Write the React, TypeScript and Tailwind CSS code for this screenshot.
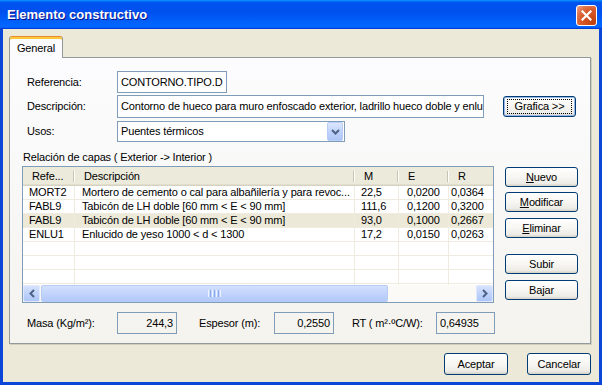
import React from "react";

function Btn({ children, className = "" }: { children: React.ReactNode; className?: string }) {
  return (
    <div
      className={`flex items-center justify-center rounded-[3px] border border-[#003c74] bg-[linear-gradient(180deg,#ffffff_0%,#f7f6f2_50%,#ecebe6_86%,#d6d0c5_100%)] text-black ${className}`}
    >
      {children}
    </div>
  );
}

const rows = [
  { r: "MORT2", d: "Mortero de cemento o cal para albañilería y para revoc...", m: "22,5", e: "0,0200", rr: "0,0364", sel: false },
  { r: "FABL9", d: "Tabicón de LH doble [60 mm < E < 90 mm]", m: "111,6", e: "0,1200", rr: "0,3200", sel: false },
  { r: "FABL9", d: "Tabicón de LH doble [60 mm < E < 90 mm]", m: "93,0", e: "0,1000", rr: "0,2667", sel: true },
  { r: "ENLU1", d: "Enlucido de yeso 1000 < d < 1300", m: "17,2", e: "0,0150", rr: "0,0263", sel: false },
  { r: "", d: "", m: "", e: "", rr: "", sel: false },
  { r: "", d: "", m: "", e: "", rr: "", sel: false },
  { r: "", d: "", m: "", e: "", rr: "", sel: false },
  { r: "", d: "", m: "", e: "", rr: "", sel: false },
];

function HeadCell({ w, pl, label }: { w: string; pl: string; label: string }) {
  return (
    <div className={`flex h-full shrink-0 items-center ${w}`}>
      <span className={`${pl} truncate`}>{label}</span>
      <span className="ml-auto h-[11px] w-[2px] shrink-0 border-l border-l-[#c7c5b2] border-r border-r-white" />
    </div>
  );
}

function Chevron({ dir }: { dir: "left" | "right" | "down" }) {
  if (dir === "down")
    return (
      <svg width="9" height="6" viewBox="0 0 9 6">
        <path d="M1 1 L4.5 4.5 L8 1" fill="none" stroke="#4d6185" strokeWidth="2" />
      </svg>
    );
  return (
    <svg width="6" height="9" viewBox="0 0 6 9">
      <path
        d={dir === "left" ? "M5 1 L1.5 4.5 L5 8" : "M1 1 L4.5 4.5 L1 8"}
        fill="none"
        stroke="#4d6185"
        strokeWidth="2"
      />
    </svg>
  );
}

export default function App() {
  return (
    <div className="flex h-[385px] w-[602px] flex-col overflow-hidden font-['Liberation_Sans',Arial,sans-serif] text-[11px] leading-[13px] tracking-[-0.15px] text-black">
      {/* Title bar */}
      <div className="flex h-[29px] shrink-0 items-center justify-between bg-[linear-gradient(180deg,#0997ff_0%,#0053ee_8%,#0050ee_40%,#0066ff_88%,#0066ff_93%,#005bff_95%,#003dd7_96%,#003dd7_100%)] pl-[7px] pr-[5px]">
        <span className="text-[13px] font-bold tracking-normal text-white [text-shadow:1px_1px_#0f1089]">
          Elemento constructivo
        </span>
        <div className="mt-[1px] flex h-[21px] w-[21px] items-center justify-center rounded-[3px] border border-white bg-[radial-gradient(circle_at_85%_85%,#c1400f_0%,#d95a2b_55%,#e0754f_75%,#f0a88e_100%)]">
          <svg width="11" height="11" viewBox="0 0 11 11">
            <path d="M1.5 1.5 L9.5 9.5 M9.5 1.5 L1.5 9.5" stroke="white" strokeWidth="2.2" strokeLinecap="square" />
          </svg>
        </div>
      </div>

      {/* Body */}
      <div className="flex flex-1 flex-col border-x-[3px] border-b-[3px] border-[#0b46d8] bg-[#ece9d8] pl-[6px] pr-[8px] pt-[7px]">
        {/* Tab strip */}
        <div className="flex">
          <div className="relative z-10 -mb-px flex h-[22px] w-[54px] items-center justify-center rounded-t-[3px] border-x border-t border-x-[#919b9c] border-t-[#e68b2c] bg-[#fcfcfe] pt-[2px] shadow-[inset_0_2px_#ffc83c]">
            General
          </div>
        </div>

        {/* Tab panel */}
        <div className="flex h-[287px] w-[582px] flex-col border border-[#919b9c] bg-[linear-gradient(180deg,#fcfcfe,#f4f3ee)] pt-[13px] shadow-[1px_1px_0_#d0cebf]">
          {/* Row 1 */}
          <div className="flex h-[22px] items-center pl-[17px]">
            <span className="w-[90px]">Referencia:</span>
            <div className="flex h-[22px] w-[110px] items-center border border-[#7f9db9] bg-white pl-[3px]">
              CONTORNO.TIPO.D
            </div>
          </div>
          {/* Row 2 */}
          <div className="mt-[2px] flex h-[23px] items-center pl-[17px]">
            <span className="w-[90px]">Descripción:</span>
            <div className="flex h-[23px] w-[367px] items-center whitespace-nowrap border border-[#7f9db9] bg-white pl-[3px]">
              Contorno de hueco para muro enfoscado exterior, ladrillo hueco doble y enlu
            </div>
            <Btn className="ml-[19px] h-[21px] w-[73px] shadow-[inset_0_0_0_1px_#98b8ea]">
              <span className="flex h-[15px] w-[65px] items-center justify-center border border-dotted border-black">
                Grafica &gt;&gt;
              </span>
            </Btn>
          </div>
          {/* Row 3 */}
          <div className="mt-[3px] flex h-[21px] items-center pl-[17px]">
            <span className="w-[90px]">Usos:</span>
            <div className="flex h-[21px] w-[228px] items-center border border-[#7f9db9] bg-white pl-[3px] pr-px">
              <span className="flex-1">Puentes térmicos</span>
              <div className="flex h-[19px] w-[16px] items-center justify-center rounded-[2px] border border-[#b9cdf7] bg-[linear-gradient(180deg,#dbe6fd,#bcd0fb_60%,#aec5f7)]">
                <Chevron dir="down" />
              </div>
            </div>
          </div>

          {/* Relación label */}
          <div className="mt-[8px] flex h-[14px] items-center pl-[13px]">Relación de capas ( Exterior -&gt; Interior )</div>

          {/* Table + buttons */}
          <div className="mt-[2px] flex pl-[12px]">
            <div className="flex h-[137px] w-[472px] flex-col overflow-hidden border border-[#7f9db9] bg-white">
              {/* Header */}
              <div className="flex h-[19px] shrink-0 bg-[#ebeadb] shadow-[inset_0_-1px_#d6d2c2,inset_0_-2px_#e2decd]">
                <HeadCell w="w-[52px]" pl="pl-[9px]" label="Refe..." />
                <HeadCell w="w-[280px]" pl="pl-[9px]" label="Descripción" />
                <HeadCell w="w-[44px]" pl="pl-[9px]" label="M" />
                <HeadCell w="w-[50px]" pl="pl-[9px]" label="E" />
                <HeadCell w="w-[60px]" pl="pl-[9px]" label="R" />
              </div>
              {/* Rows */}
              <div className="flex flex-1 flex-col overflow-hidden">
                {rows.map((row, i) => (
                  <div
                    key={i}
                    className={`flex h-[14px] shrink-0 whitespace-nowrap ${row.sel ? "bg-[#ece9d8]" : ""}`}
                  >
                    <div className="w-[52px] shrink-0 overflow-hidden border-b border-r border-[#efecdf] pl-[6px]">{row.r}</div>
                    <div className="w-[280px] shrink-0 overflow-hidden border-b border-r border-[#efecdf] pl-[7px]">{row.d}</div>
                    <div className="w-[44px] shrink-0 overflow-hidden border-b border-r border-[#efecdf] pl-[6px]">{row.m}</div>
                    <div className="w-[50px] shrink-0 overflow-hidden border-b border-r border-[#efecdf] pl-[8px]">{row.e}</div>
                    <div className="w-[60px] shrink-0 overflow-hidden border-b border-r border-[#efecdf] pl-[2px]">{row.rr}</div>
                  </div>
                ))}
              </div>
              {/* Horizontal scrollbar */}
              <div className="flex h-[17px] shrink-0 items-stretch bg-[#f7f6f1]">
                <div className="flex w-[17px] items-center justify-center rounded-[2px] border border-[#dfe8fd] bg-[linear-gradient(180deg,#d6e2fd,#bcd0fb_60%,#aec5f7)]">
                  <Chevron dir="left" />
                </div>
                <div className="ml-px flex w-[347px] items-center justify-center rounded-[2px] border border-[#b6cbf6] bg-[linear-gradient(180deg,#d3e0fd,#c2d4fc_50%,#b3c9f9)]">
                  <div className="flex h-[7px] gap-[1px]">
                    <span className="w-px bg-[#eef3fe]" />
                    <span className="w-px bg-[#8aaaf0]" />
                    <span className="w-px bg-[#eef3fe]" />
                    <span className="w-px bg-[#8aaaf0]" />
                    <span className="w-px bg-[#eef3fe]" />
                    <span className="w-px bg-[#8aaaf0]" />
                    <span className="w-px bg-[#eef3fe]" />
                  </div>
                </div>
                <div className="flex-1 bg-[#fbfaf6]" />
                <div className="flex w-[17px] items-center justify-center rounded-[2px] border border-[#dfe8fd] bg-[linear-gradient(180deg,#d6e2fd,#bcd0fb_60%,#aec5f7)]">
                  <Chevron dir="right" />
                </div>
              </div>
            </div>

            {/* Right buttons */}
            <div className="ml-[11px] flex w-[73px] flex-col">
              <Btn className="mt-[1px] h-[20px]">
                <span><u>N</u>uevo</span>
              </Btn>
              <Btn className="mt-[5px] h-[20px]">
                <span><u>M</u>odificar</span>
              </Btn>
              <Btn className="mt-[6px] h-[20px]">
                <span><u>E</u>liminar</span>
              </Btn>
              <Btn className="mt-[16px] h-[20px]">Subir</Btn>
              <Btn className="mt-[6px] h-[20px]">Bajar</Btn>
            </div>
          </div>

          {/* Bottom values */}
          <div className="mt-[9px] flex h-[22px] items-center pl-[17px]">
            <span className="w-[90px]">Masa (Kg/m²):</span>
            <div className="flex h-[22px] w-[60px] items-center justify-end border border-[#7f9db9] pr-[3px]">244,3</div>
            <span className="ml-[22px] w-[75px]">Espesor (m):</span>
            <div className="flex h-[22px] w-[60px] items-center justify-end border border-[#7f9db9] pr-[3px]">0,2550</div>
            <span className="ml-[18px] w-[84px]">RT ( m²·ºC/W):</span>
            <div className="flex h-[22px] w-[59px] items-center border border-[#7f9db9] pl-[3px]">0,64935</div>
          </div>
        </div>

        {/* Dialog buttons */}
        <div className="mt-[9px] flex w-[582px] justify-end gap-[19px]">
          <Btn className="h-[22px] w-[64px]">Aceptar</Btn>
          <Btn className="h-[22px] w-[64px]">Cancelar</Btn>
        </div>
      </div>
    </div>
  );
}
